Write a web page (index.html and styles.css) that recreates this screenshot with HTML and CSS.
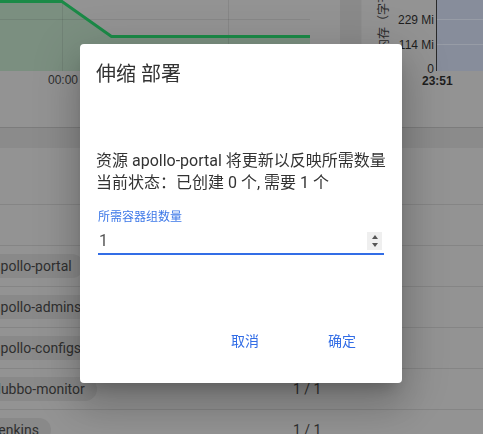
FILE: index.html
```html
<!DOCTYPE html>
<html lang="zh">
<head>
<meta charset="utf-8">
<title>伸缩 部署</title>
<link rel="stylesheet" href="styles.css">
</head>
<body>
<div class="page">
  <div class="charts">
    <div class="card card-left">
      <svg class="plot-left" width="340" height="71" viewBox="0 0 340 71">
        <path d="M0 1.5 L62 1.5 L111.5 36.5 L310 36.5 L310 71 L0 71 Z" fill="#7b8f80"/>
        <line x1="0" y1="19.5" x2="310" y2="19.5" stroke="rgba(0,0,0,0.08)" stroke-width="1"/>
        <line x1="62.5" y1="0" x2="62.5" y2="71" stroke="rgba(0,0,0,0.08)" stroke-width="1"/>
        <line x1="228.5" y1="0" x2="228.5" y2="71" stroke="rgba(0,0,0,0.08)" stroke-width="1"/>
        <polyline points="0,1.5 62,1.5 111.5,36.5 310,36.5" fill="none" stroke="#1b8a47" stroke-width="3"/>
      </svg>
      <div class="xlabels"><span>00:00</span></div>
    </div>
    <div class="card card-right">
      <svg width="121" height="127" viewBox="0 0 121 127">
        <rect x="75" y="0" width="46" height="71" fill="#878d9b"/>
        <line x1="75" y1="19.5" x2="121" y2="19.5" stroke="#979ca6" stroke-width="1"/>
        <line x1="75" y1="44.5" x2="121" y2="44.5" stroke="#979ca6" stroke-width="1"/>
        <line x1="74.5" y1="0" x2="74.5" y2="71" stroke="#2a2a2a" stroke-width="1"/>
        <text class="axis-title" transform="translate(25.5,51) rotate(-90)">内存（字节）</text>
        <text class="tick" x="72" y="24" text-anchor="end">229 Mi</text>
        <text class="tick" x="72" y="49" text-anchor="end">114 Mi</text>
        <text class="tick" x="72" y="73" text-anchor="end">0</text>
        <text class="tick bold" x="60" y="85">23:51</text>
      </svg>
    </div>
  </div>
  <div class="band"></div>
  <div class="table">
    <div class="row header"></div>
    <div class="row"><div class="name-cell"></div></div>
    <div class="row"><div class="name-cell"><span class="chip">apollo-portal</span></div><div class="count">1 / 1</div></div>
    <div class="row"><div class="name-cell"><span class="chip">apollo-adminservice</span></div><div class="count">1 / 1</div></div>
    <div class="row"><div class="name-cell"><span class="chip">apollo-configservice</span></div><div class="count">1 / 1</div></div>
    <div class="row"><div class="name-cell"><span class="chip">dubbo-monitor</span></div><div class="count">1 / 1</div></div>
    <div class="row"><div class="name-cell"><span class="chip chip-j">jenkins</span></div><div class="count">1 / 1</div></div>
  </div>
</div>

<div class="dialog-layer">
  <div class="dialog">
    <h2 class="dialog-title">伸缩 部署</h2>
    <div class="dialog-body">
      <p class="desc">资源 apollo-portal 将更新以反映所需数量<br>当前状态：已创建 0 个, 需要 1 个</p>
      <div class="field">
        <div class="field-label">所需容器组数量</div>
        <div class="field-input">
          <span class="field-value">1</span>
          <span class="spinner"><span class="tri up"></span><span class="tri down"></span></span>
        </div>
      </div>
    </div>
    <div class="dialog-actions">
      <button class="btn">取消</button>
      <button class="btn">确定</button>
    </div>
  </div>
</div>
</body>
</html>
```
FILE: styles.css
```css
html, body {
  margin: 0;
  padding: 0;
  width: 483px;
  height: 434px;
  overflow: hidden;
}
body {
  background: #939393;
  font-family: Roboto, "Noto Sans CJK SC", sans-serif;
  position: relative;
}
.page {
  width: 483px;
}
.charts {
  display: flex;
  height: 127px;
  background: #8a8a8a;
  border-bottom: 1px solid #7c7c7c;
}
.card {
  background: #939393;
}
.card-left {
  width: 340px;
  display: flex;
  flex-direction: column;
}
.plot-left {
  display: block;
}
.xlabels {
  padding: 2px 0 0 48px;
  font: 12px "Liberation Sans", Arial, sans-serif;
  color: #2e2e2e;
}
.card-right {
  margin-left: 21px;
  flex: 1;
  border-left: 1px solid #8f8f8f;
}
.card-right svg {
  display: block;
}
.axis-title {
  font: 12px "Noto Sans CJK SC", sans-serif;
  fill: #2a2a2a;
}
.tick {
  font: 12px "Liberation Sans", Arial, sans-serif;
  fill: #1e1e1e;
}
.tick.bold {
  font-weight: bold;
}
.band {
  height: 20px;
  background: #8b8b8b;
}
.row {
  height: 40px;
  border-top: 1px solid #858585;
  display: flex;
  align-items: center;
}
.row.header {
  height: 56px;
  border-top: none;
}
.name-cell {
  width: 312px;
  margin-left: -19px;
  flex: none;
}
.chip {
  display: inline-block;
  height: 24px;
  line-height: 24px;
  padding: 0 12px;
  border-radius: 12px;
  background: #898989;
  color: #2f2f2f;
  font-size: 14px;
  white-space: nowrap;
}
.chip-j {
  margin-left: 2px;
}
.count {
  font-size: 14px;
  color: #2f2f2f;
  white-space: nowrap;
}

/* dialog */
.dialog-layer {
  position: fixed;
  inset: 0;
}
.dialog {
  position: absolute;
  left: 80px;
  top: 44px;
  width: 322px;
  height: 339px;
  box-sizing: border-box;
  background: #fff;
  border-radius: 4px;
  box-shadow: 0 11px 15px -7px rgba(0,0,0,.2), 0 24px 38px 3px rgba(0,0,0,.14), 0 9px 46px 8px rgba(0,0,0,.12);
  display: flex;
  flex-direction: column;
  padding: 18px 16px 0 16px;
}
.dialog-title {
  margin: 0;
  font-size: 20px;
  line-height: 24px;
  font-weight: 400;
  color: #333;
}
.dialog-body {
  margin-top: 64px;
}
.desc {
  margin: 0;
  font-size: 16px;
  line-height: 22px;
  color: #333;
  white-space: nowrap;
}
.field {
  margin: 16px 2px 0 2px;
}
.field-label {
  font-size: 12px;
  line-height: 14px;
  color: #3d78e8;
}
.field-input {
  margin-top: 4px;
  height: 25px;
  display: flex;
  align-items: center;
  border-bottom: 2px solid #326de6;
}
.field-value {
  flex: 1;
  font-size: 16px;
  line-height: 22px;
  color: #555;
  padding-left: 1px;
}
.spinner {
  width: 15px;
  height: 18px;
  margin-right: 2px;
  background: #efefef;
  display: flex;
  flex-direction: column;
  align-items: center;
  justify-content: center;
  gap: 4px;
}
.tri {
  width: 0;
  height: 0;
  border-left: 3.5px solid transparent;
  border-right: 3.5px solid transparent;
}
.tri.up {
  border-bottom: 4px solid #555;
}
.tri.down {
  border-top: 4px solid #555;
}
.dialog-actions {
  margin-top: auto;
  display: flex;
  justify-content: flex-end;
  gap: 9px;
  padding-bottom: 25px;
}
.btn {
  width: 88px;
  height: 36px;
  border: none;
  background: transparent;
  font-family: Roboto, "Noto Sans CJK SC", sans-serif;
  font-size: 14px;
  color: #326de6;
  padding: 0;
}
```
